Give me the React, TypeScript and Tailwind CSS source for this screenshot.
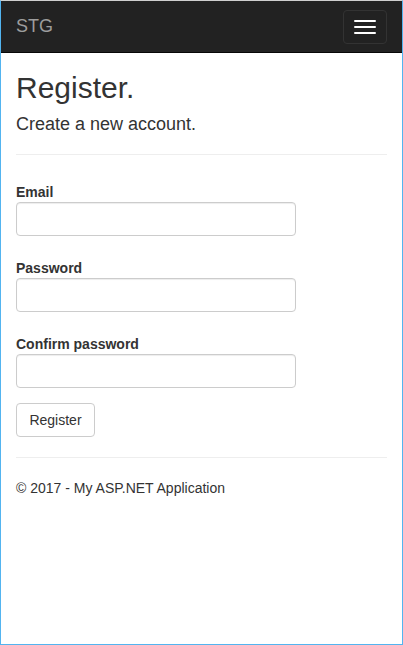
export default function App() {
  return (
    <div
      className="h-[645px] w-[403px] border-t border-t-[#cfcfcf] border-x border-b border-x-[#52b4f0] border-b-[#52b4f0] bg-white text-[#333] text-[14px] leading-[20px] overflow-hidden"
      style={{ fontFamily: '"Liberation Sans", Arial, sans-serif' }}
    >
      <nav className="h-[52px] bg-[#222] border-b border-[#080808] flex items-start justify-between">
        <a className="px-[15px] py-[15px] text-[18px] leading-[20px] text-[#9d9d9d]">STG</a>
        <button
          type="button"
          className="mt-[9px] mr-[15px] flex h-[34px] w-[44px] flex-col gap-[4px] rounded-[4px] border border-[#333] px-[10px] py-[9px]"
        >
          <span className="block h-[2px] w-[22px] rounded-[1px] bg-white" />
          <span className="block h-[2px] w-[22px] rounded-[1px] bg-white" />
          <span className="block h-[2px] w-[22px] rounded-[1px] bg-white" />
        </button>
      </nav>

      <div className="px-[15px]">
        <h2 className="mt-[18px] mb-[10px] text-[30px] leading-[33px] font-normal">Register.</h2>
        <h4 className="mt-[10px] mb-[10px] text-[18px] leading-[20px] font-normal">Create a new account.</h4>
        <hr className="my-[20px] border-t border-[#eee]" />

        <form className="flex flex-col">
          <div className="mb-[15px] flex flex-col items-start">
            <label className="pt-[7px] font-bold">Email</label>
            <input className="h-[34px] w-[280px] rounded-[4px] border border-[#ccc] px-[12px] shadow-[inset_0_1px_1px_rgba(0,0,0,0.075)] outline-none" />
          </div>
          <div className="mb-[15px] flex flex-col items-start">
            <label className="pt-[7px] font-bold">Password</label>
            <input
              type="password"
              className="h-[34px] w-[280px] rounded-[4px] border border-[#ccc] px-[12px] shadow-[inset_0_1px_1px_rgba(0,0,0,0.075)] outline-none"
            />
          </div>
          <div className="mb-[15px] flex flex-col items-start">
            <label className="pt-[7px] font-bold">Confirm password</label>
            <input
              type="password"
              className="h-[34px] w-[280px] rounded-[4px] border border-[#ccc] px-[12px] shadow-[inset_0_1px_1px_rgba(0,0,0,0.075)] outline-none"
            />
          </div>
          <div>
            <button
              type="submit"
              className="h-[34px] w-[79px] rounded-[4px] border border-[#ccc] bg-white text-center text-[14px] leading-[20px] text-[#333]"
            >
              Register
            </button>
          </div>
        </form>

        <hr className="mt-[20px] mb-[20px] border-t border-[#eee]" />
        <footer>
          <p>© 2017 - My ASP.NET Application</p>
        </footer>
      </div>
    </div>
  );
}
